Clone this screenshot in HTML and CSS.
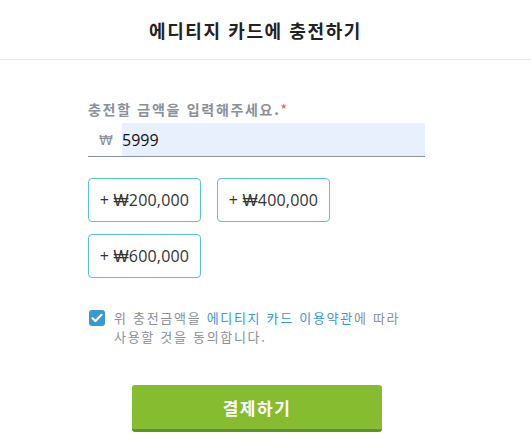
FILE: index.html
```html
<!DOCTYPE html>
<html lang="ko">
<head>
<meta charset="utf-8">
<link rel="stylesheet" href="styles.css">
</head>
<body>
<header class="header">
  <h1 class="title">에디티지 카드에 충전하기</h1>
</header>
<main class="content">
  <label class="label">충전할 금액을 입력해주세요.<span class="req">*</span></label>
  <div class="amount-row">
    <span class="won">₩</span>
    <div class="amount-input">5999</div>
  </div>
  <div class="presets">
    <button class="preset">+ ₩200,000</button>
    <button class="preset">+ ₩400,000</button>
    <button class="preset">+ ₩600,000</button>
  </div>
  <div class="agree">
    <span class="checkbox">
      <svg width="12" height="10" viewBox="0 0 12 10"><path d="M1.5 5.2 L4.5 8 L10.5 1.8" fill="none" stroke="#fff" stroke-width="2.2" stroke-linecap="round" stroke-linejoin="round"/></svg>
    </span>
    <p class="agree-text">위 충전금액을 <span class="link">에디티지 카드 이용약관</span>에 따라 사용할 것을 동의합니다.</p>
  </div>
  <div class="submit-wrap">
    <button class="submit">결제하기</button>
  </div>
</main>
</body>
</html>
```

FILE: styles.css
```css
* { box-sizing: border-box; }
body {
  margin: 0;
  background: #fff;
  font-family: "Noto Sans CJK KR", "Noto Sans", sans-serif;
}
.header {
  height: 60px;
  border-bottom: 1px solid #f5e7dc;
  display: flex;
  align-items: center;
  justify-content: center;
  padding-right: 20px;
}
.title {
  margin: 0;
  font-size: 18px;
  font-weight: 700;
  color: #222;
  letter-spacing: 1.6px;
  line-height: 24px;
}
.content {
  padding: 39px 0 0 88px;
  width: 337px;
  box-sizing: content-box;
}
.label {
  display: block;
  font-size: 14px;
  font-weight: 700;
  color: #8a9099;
  line-height: 20px;
  letter-spacing: 1.7px;
}
.req { color: #f0505a; font-weight: 400; letter-spacing: 0; }
.amount-row {
  margin-top: 4px;
  display: flex;
  height: 34px;
  border-bottom: 1px solid #8b93a3;
}
.won {
  width: 34px;
  display: flex;
  align-items: center;
  justify-content: center;
  font-family: "DejaVu Sans", sans-serif;
  font-size: 14px;
  color: #8a9099;
  padding-left: 2px;
}
.amount-input {
  flex: 1;
  background: #e8f0fe;
  font-family: "Open Sans", sans-serif;
  font-size: 16px;
  color: #111;
  display: flex;
  align-items: center;
  padding-left: 0;
}
.presets {
  margin-top: 21px;
  display: flex;
  flex-wrap: wrap;
  gap: 12px 16px;
  width: 260px;
}
.preset {
  width: 113px;
  height: 44px;
  border: 1px solid #5bbfe8;
  border-radius: 4px;
  background: #fff;
  font-family: "Open Sans", sans-serif;
  font-size: 16px;
  color: #333;
  padding: 0;
  letter-spacing: 0.2px;
}
.agree {
  margin-top: 30px;
  display: flex;
  align-items: flex-start;
  gap: 9px;
}
.checkbox {
  width: 16px;
  height: 16px;
  flex: none;
  margin-top: 2px;
  margin-left: 1px;
  border-radius: 3px;
  background: #3a99cf;
  display: flex;
  align-items: center;
  justify-content: center;
}
.agree-text {
  margin: 0;
  font-size: 13px;
  line-height: 19px;
  color: #8a9099;
  letter-spacing: 1.7px;
  width: 292px;
}
.link { color: #3a99cf; }
.submit-wrap {
  margin-top: 39px;
  padding-left: 44px;
}
.submit {
  width: 250px;
  height: 47px;
  background: #86bc2f;
  border: none;
  border-bottom: 3px solid #5e9230;
  border-radius: 3px;
  font-family: "Noto Sans CJK KR", sans-serif;
  font-size: 17px;
  font-weight: 700;
  color: #fff;
  letter-spacing: 1.5px;
}
```
